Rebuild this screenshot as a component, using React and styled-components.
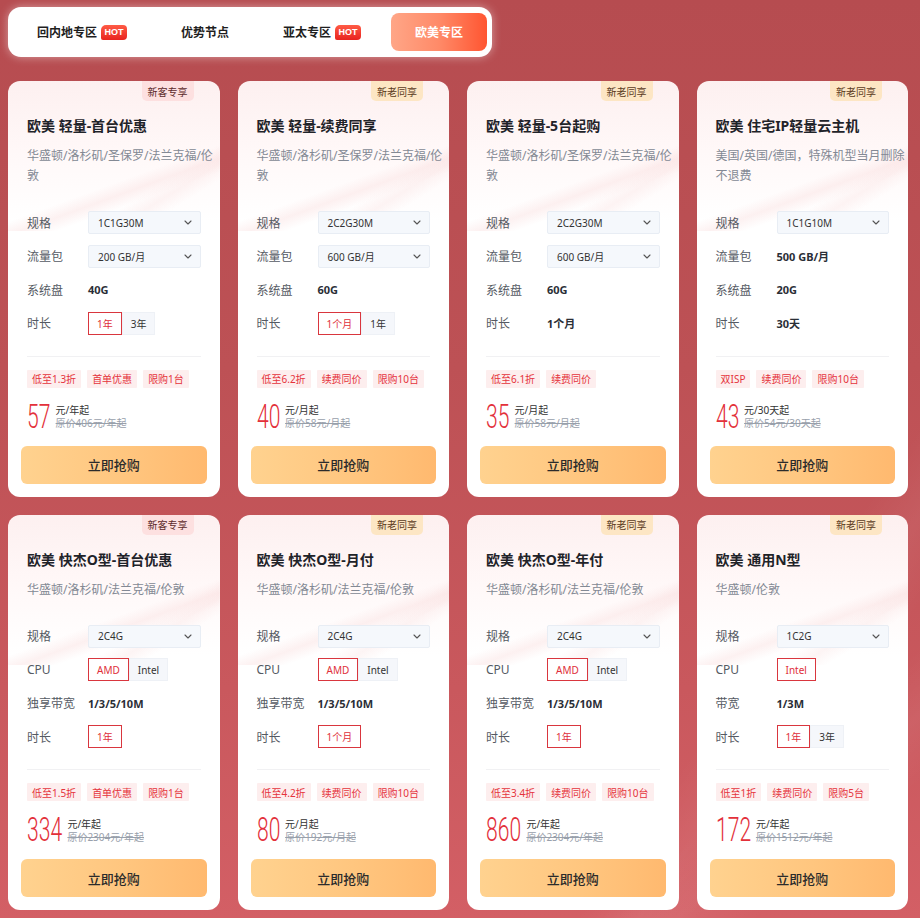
import React from 'react';
import styled, { createGlobalStyle } from 'styled-components';

const GlobalStyle = createGlobalStyle`
  html, body { margin: 0; padding: 0; }
  body {
    min-height: 918px;
    background:
      linear-gradient(125deg, transparent 78%, rgba(255,255,255,0.05) 82%, transparent 86%),
      linear-gradient(140deg, transparent 84%, rgba(255,255,255,0.05) 88%, transparent 92%),
      linear-gradient(180deg, #b64c50 0%, #bd5155 40%, #c9585d 75%, #d35f65 100%);
    font-family: "Noto Sans", "Noto Sans CJK SC", sans-serif;
    color: #1f2329;
  }
  * { box-sizing: border-box; }
`;

const Page = styled.div`
  padding: 7px 0 6px 8px;
`;

const TabBar = styled.div`
  display: inline-flex;
  gap: 6px;
  padding: 6px 5px;
  background: #fff;
  border-radius: 13px;
  box-shadow: 0 0 10px rgba(255, 255, 255, 0.45);
`;

const Tab = styled.div`
  height: 38px;
  padding: 0 24px;
  display: flex;
  align-items: center;
  gap: 4px;
  border-radius: 8px;
  font-size: 12px;
  font-weight: ${p => (p.$active ? 700 : 600)};
  color: ${p => (p.$active ? '#fff' : '#1f1f1f')};
  background: ${p => (p.$active ? 'linear-gradient(90deg, #ffa687 0%, #ff8a68 50%, #ff5531 100%)' : 'transparent')};
`;

const Hot = styled.span`
  display: inline-flex;
  align-items: center;
  justify-content: center;
  height: 15px;
  width: 26px;
  border-radius: 5px 4px 4px 2px;
  background: linear-gradient(180deg, #ff5b45 0%, #e8231f 100%);
  color: #fff;
  font-size: 9px;
  font-weight: 800;
  font-family: "Liberation Sans", "Noto Sans", sans-serif;
`;

const Grid = styled.div`
  margin-top: 24px;
  display: grid;
  grid-template-columns: repeat(4, 211.5px);
  gap: 18px;
`;

const Card = styled.div`
  position: relative;
  border-radius: 12px;
  padding: 35px 19px 13px;
  display: flex;
  flex-direction: column;
  background:
    linear-gradient(160deg, transparent 62%, rgba(248, 215, 215, 0.35) 68%, transparent 74%) top / 100% 150px no-repeat,
    linear-gradient(148deg, transparent 70%, rgba(248, 220, 220, 0.3) 76%, transparent 82%) top / 100% 150px no-repeat,
    linear-gradient(180deg, #fdf0f0 0%, #fff8f8 70px, #ffffff 140px);
`;

const Badge = styled.div`
  position: absolute;
  top: 0;
  right: 26px;
  height: 20px;
  padding: 0 6px;
  display: flex;
  align-items: center;
  font-size: 10px;
  border-radius: 0 0 5px 5px;
  background: ${p => (p.$kind === 'new' ? '#fde0e0' : '#fde6c4')};
  color: ${p => (p.$kind === 'new' ? '#5c2a2a' : '#5a3a1c')};
`;

const Title = styled.div`
  font-size: 14px;
  font-weight: 700;
  line-height: 20px;
  color: #1f2329;
  white-space: nowrap;
`;

const Sub = styled.div`
  margin-top: 10px;
  font-size: 12px;
  line-height: 20px;
  color: #838994;
  margin-right: -12px;
`;

const SubLine = styled.div`
  white-space: nowrap;
`;

const Specs = styled.div`
  margin-top: 25px;
  display: flex;
  flex-direction: column;
  gap: 10.5px;
`;

const SpecRow = styled.div`
  display: grid;
  grid-template-columns: 61px 1fr;
  align-items: center;
  height: 23px;
`;

const Label = styled.div`
  font-size: 12px;
  color: #555a63;
  white-space: nowrap;
`;

const Value = styled.div`
  font-size: 11px;
  font-weight: 700;
  color: #2a2e36;
`;

const Select = styled.div`
  height: 23px;
  border: 1px solid #e8edf4;
  background: #f5f8fc;
  border-radius: 2px;
  padding: 0 8px 0 9px;
  display: flex;
  align-items: center;
  justify-content: space-between;
  font-size: 10px;
  color: #333;
`;

const Toggles = styled.div`
  display: flex;
`;

const Opt = styled.div`
  height: 23px;
  min-width: 32px;
  padding: 0 8px;
  display: flex;
  align-items: center;
  justify-content: center;
  font-size: 10px;
  white-space: nowrap;
  border: 1px solid ${p => (p.$sel ? '#d9363e' : '#eef1f6')};
  background: ${p => (p.$sel ? '#fff' : '#f5f7fb')};
  color: ${p => (p.$sel ? '#e0303a' : '#333')};
`;

const Divider = styled.div`
  margin-top: 21px;
  height: 1px;
  background: #f1f1f3;
`;

const Tags = styled.div`
  margin-top: 13px;
  display: flex;
  gap: 6px;
  white-space: nowrap;
`;

const Tag = styled.div`
  flex-shrink: 0;
  height: 18px;
  padding: 0 5px;
  display: flex;
  align-items: center;
  font-size: 10px;
  color: #e5333c;
  background: #fdeeee;
  border-radius: 1px;
`;

const PriceRow = styled.div`
  margin-top: 11px;
  display: flex;
  align-items: center;
  gap: 5px;
  height: 34px;
`;

const Num = styled.div`
  width: ${p => p.$digits * 11.8}px;
  white-space: nowrap;
  font-family: "Roboto", "Liberation Sans", sans-serif;
  font-weight: 300;
  font-size: 34px;
  line-height: 34px;
  color: #e3303a;
  & > span {
    display: inline-block;
    transform: scaleX(0.62);
    transform-origin: left center;
  }
`;

const Units = styled.div`
  padding-top: 3px;
  display: flex;
  flex-direction: column;
  font-size: 10px;
  line-height: 13px;
  white-space: nowrap;
`;

const Unit = styled.div`
  color: #333;
`;

const Orig = styled.div`
  color: #98a0ab;
  text-decoration: line-through;
`;

const BuyButton = styled.div`
  margin: 13px -6px 0;
  height: 38px;
  border-radius: 6px;
  display: flex;
  align-items: center;
  justify-content: center;
  font-size: 13px;
  font-weight: 500;
  color: #2b2b2b;
  background: linear-gradient(90deg, #ffd28f 0%, #ffc67f 55%, #ffb96f 100%);
`;

const Chevron = () => (
  <svg width="8" height="5" viewBox="0 0 8 5" fill="none">
    <path d="M1 1l3 3 3-3" stroke="#555" strokeWidth="1.1" strokeLinecap="round" strokeLinejoin="round" />
  </svg>
);

const subA = ['华盛顿/洛杉矶/圣保罗/法兰克福/伦', '敦'];
const subB = ['华盛顿/洛杉矶/法兰克福/伦敦'];

const cards = [
  {
    badge: 'new', title: '欧美 轻量-首台优惠', sub: subA,
    rows: [
      { label: '规格', type: 'select', value: '1C1G30M' },
      { label: '流量包', type: 'select', value: '200 GB/月' },
      { label: '系统盘', type: 'text', value: '40G' },
      { label: '时长', type: 'toggle', options: ['1年', '3年'], sel: 0 },
    ],
    tags: ['低至1.3折', '首单优惠', '限购1台'], price: '57', unit: '元/年起', orig: '原价406元/年起',
  },
  {
    badge: 'old', title: '欧美 轻量-续费同享', sub: subA,
    rows: [
      { label: '规格', type: 'select', value: '2C2G30M' },
      { label: '流量包', type: 'select', value: '600 GB/月' },
      { label: '系统盘', type: 'text', value: '60G' },
      { label: '时长', type: 'toggle', options: ['1个月', '1年'], sel: 0 },
    ],
    tags: ['低至6.2折', '续费同价', '限购10台'], price: '40', unit: '元/月起', orig: '原价58元/月起',
  },
  {
    badge: 'old', title: '欧美 轻量-5台起购', sub: subA,
    rows: [
      { label: '规格', type: 'select', value: '2C2G30M' },
      { label: '流量包', type: 'select', value: '600 GB/月' },
      { label: '系统盘', type: 'text', value: '60G' },
      { label: '时长', type: 'text', value: '1个月' },
    ],
    tags: ['低至6.1折', '续费同价'], price: '35', unit: '元/月起', orig: '原价58元/月起',
  },
  {
    badge: 'old', title: '欧美 住宅IP轻量云主机', sub: ['美国/英国/德国，特殊机型当月删除', '不退费'],
    rows: [
      { label: '规格', type: 'select', value: '1C1G10M' },
      { label: '流量包', type: 'text', value: '500 GB/月' },
      { label: '系统盘', type: 'text', value: '20G' },
      { label: '时长', type: 'text', value: '30天' },
    ],
    tags: ['双ISP', '续费同价', '限购10台'], price: '43', unit: '元/30天起', orig: '原价54元/30天起',
  },
  {
    badge: 'new', title: '欧美 快杰O型-首台优惠', sub: subB,
    rows: [
      { label: '规格', type: 'select', value: '2C4G' },
      { label: 'CPU', type: 'toggle', options: ['AMD', 'Intel'], sel: 0 },
      { label: '独享带宽', type: 'text', value: '1/3/5/10M' },
      { label: '时长', type: 'toggle', options: ['1年'], sel: 0 },
    ],
    tags: ['低至1.5折', '首单优惠', '限购1台'], price: '334', unit: '元/年起', orig: '原价2304元/年起',
  },
  {
    badge: 'old', title: '欧美 快杰O型-月付', sub: subB,
    rows: [
      { label: '规格', type: 'select', value: '2C4G' },
      { label: 'CPU', type: 'toggle', options: ['AMD', 'Intel'], sel: 0 },
      { label: '独享带宽', type: 'text', value: '1/3/5/10M' },
      { label: '时长', type: 'toggle', options: ['1个月'], sel: 0 },
    ],
    tags: ['低至4.2折', '续费同价', '限购10台'], price: '80', unit: '元/月起', orig: '原价192元/月起',
  },
  {
    badge: 'old', title: '欧美 快杰O型-年付', sub: subB,
    rows: [
      { label: '规格', type: 'select', value: '2C4G' },
      { label: 'CPU', type: 'toggle', options: ['AMD', 'Intel'], sel: 0 },
      { label: '独享带宽', type: 'text', value: '1/3/5/10M' },
      { label: '时长', type: 'toggle', options: ['1年'], sel: 0 },
    ],
    tags: ['低至3.4折', '续费同价', '限购10台'], price: '860', unit: '元/年起', orig: '原价2304元/年起',
  },
  {
    badge: 'old', title: '欧美 通用N型', sub: ['华盛顿/伦敦'],
    rows: [
      { label: '规格', type: 'select', value: '1C2G' },
      { label: 'CPU', type: 'toggle', options: ['Intel'], sel: 0 },
      { label: '带宽', type: 'text', value: '1/3M' },
      { label: '时长', type: 'toggle', options: ['1年', '3年'], sel: 0 },
    ],
    tags: ['低至1折', '续费同价', '限购5台'], price: '172', unit: '元/年起', orig: '原价1512元/年起',
  },
];

const tabs = [
  { name: '回内地专区', hot: true },
  { name: '优势节点' },
  { name: '亚太专区', hot: true },
  { name: '欧美专区', active: true },
];

function SpecValue({ row }) {
  if (row.type === 'select') {
    return (
      <Select>
        <span>{row.value}</span>
        <Chevron />
      </Select>
    );
  }
  if (row.type === 'toggle') {
    return (
      <Toggles>
        {row.options.map((o, i) => (
          <Opt key={o} $sel={i === row.sel}>{o}</Opt>
        ))}
      </Toggles>
    );
  }
  return <Value>{row.value}</Value>;
}

function ProductCard({ c }) {
  return (
    <Card>
      <Badge $kind={c.badge}>{c.badge === 'new' ? '新客专享' : '新老同享'}</Badge>
      <Title>{c.title}</Title>
      <Sub>
        {c.sub.map(l => (
          <SubLine key={l}>{l}</SubLine>
        ))}
      </Sub>
      <Specs>
        {c.rows.map(r => (
          <SpecRow key={r.label}>
            <Label>{r.label}</Label>
            <SpecValue row={r} />
          </SpecRow>
        ))}
      </Specs>
      <Divider />
      <Tags>
        {c.tags.map(t => (
          <Tag key={t}>{t}</Tag>
        ))}
      </Tags>
      <PriceRow>
        <Num $digits={c.price.length}>
          <span>{c.price}</span>
        </Num>
        <Units>
          <Unit>{c.unit}</Unit>
          <Orig>{c.orig}</Orig>
        </Units>
      </PriceRow>
      <BuyButton>立即抢购</BuyButton>
    </Card>
  );
}

export default function App() {
  return (
    <>
      <GlobalStyle />
      <Page>
        <TabBar>
          {tabs.map(t => (
            <Tab key={t.name} $active={t.active}>
              {t.name}
              {t.hot && <Hot>HOT</Hot>}
            </Tab>
          ))}
        </TabBar>
        <Grid>
          {cards.map(c => (
            <ProductCard key={c.title} c={c} />
          ))}
        </Grid>
      </Page>
    </>
  );
}
